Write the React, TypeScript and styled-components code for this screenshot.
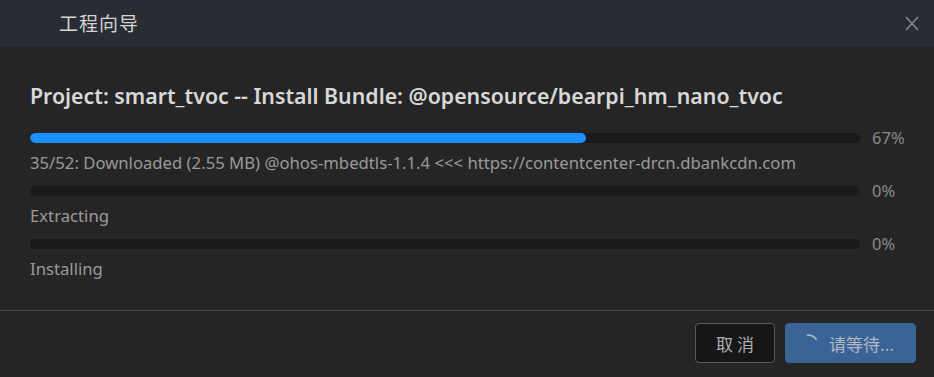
import React from "react";
import styled, { createGlobalStyle } from "styled-components";

const GlobalStyle = createGlobalStyle`
  *, *::before, *::after {
    box-sizing: border-box;
  }
  html, body {
    margin: 0;
    padding: 0;
    background: #252525;
  }
  body {
    font-family: "Noto Sans", "Noto Sans CJK SC", sans-serif;
  }
`;

interface Step {
  label: string;
  percent: number;
}

const steps: Step[] = [
  {
    label:
      "35/52: Downloaded (2.55 MB) @ohos-mbedtls-1.1.4 <<< https://contentcenter-drcn.dbankcdn.com",
    percent: 67,
  },
  { label: "Extracting", percent: 0 },
  { label: "Installing", percent: 0 },
];

export default function App() {
  return (
    <>
      <GlobalStyle />
      <Dialog>
        <TitleBar>
          <Title>工程向导</Title>
          <CloseButton aria-label="close">
            <svg width="14" height="15" viewBox="0 0 14 15">
              <path
                d="M1 1 L13 14 M13 1 L1 14"
                stroke="#8a8d93"
                strokeWidth="1.4"
                fill="none"
              />
            </svg>
          </CloseButton>
        </TitleBar>

        <Body>
          <Heading>
            Project: smart_tvoc -- Install Bundle: @opensource/bearpi_hm_nano_tvoc
          </Heading>
          <StepList>
            {steps.map((step) => (
              <StepRow key={step.label}>
                <Track>
                  <Fill style={{ width: `${step.percent}%` }} />
                </Track>
                <Percent>{step.percent}%</Percent>
                <StepLabel>{step.label}</StepLabel>
              </StepRow>
            ))}
          </StepList>
        </Body>

        <Footer>
          <Button>取 消</Button>
          <Button primary>
            <Spinner viewBox="0 0 16 16">
              {/* small arc of the loading ring */}
              <path
                d="M2.3 2.2 A10 10 0 0 1 11.2 6.3"
                stroke="#aab4c2"
                strokeWidth="1.6"
                fill="none"
                strokeLinecap="round"
              />
            </Spinner>
            请等待...
          </Button>
        </Footer>
      </Dialog>
    </>
  );
}

const Dialog = styled.div`
  width: 934px;
  height: 377px;
  display: flex;
  flex-direction: column;
  background: #252525;
  overflow: hidden;
`;

const TitleBar = styled.div`
  height: 47px;
  flex-shrink: 0;
  display: flex;
  align-items: center;
  justify-content: space-between;
  padding: 0 15px 0 59px;
  background: #292c33;
`;

const Title = styled.div`
  font-family: "Noto Sans CJK SC", sans-serif;
  font-size: 19px;
  color: #d4d4d4;
  letter-spacing: 1px;
  margin-top: -2px;
`;

const CloseButton = styled.div`
  display: flex;
  align-items: center;
  margin-top: -1px;
`;

const Body = styled.div`
  flex: 1;
  padding: 35px 29px 0 30px;
`;

const Heading = styled.h1`
  margin: 0 0 23px;
  font-size: 21.3px;
  font-weight: 600;
  color: #d8d8d8;
  line-height: 28px;
  white-space: nowrap;
`;

const StepList = styled.div`
  display: flex;
  flex-direction: column;
  gap: 12px;
`;

const StepRow = styled.div`
  display: grid;
  grid-template-columns: 830px 1fr;
  grid-template-rows: 10px auto;
  column-gap: 12px;
  align-items: center;
`;

const Track = styled.div`
  height: 10px;
  border-radius: 5px;
  background: #1a1a1a;
  overflow: hidden;
`;

const Fill = styled.div`
  height: 100%;
  border-radius: 5px;
  background: #1e8fff;
`;

const Percent = styled.div`
  font-size: 16.5px;
  color: #8a8a8a;
  line-height: 22px;
  margin: -6px 0;
`;

const StepLabel = styled.div`
  grid-column: 1 / span 2;
  font-size: 16.7px;
  color: #9a9a9a;
  line-height: 22px;
  white-space: nowrap;
  margin-top: 9px;
`;

const Footer = styled.div`
  height: 67px;
  flex-shrink: 0;
  display: flex;
  align-items: center;
  justify-content: flex-end;
  gap: 10px;
  padding: 0 18px 2px 0;
  border-top: 1px solid #444;
`;

const Spinner = styled.svg`
  width: 16px;
  height: 16px;
  margin: -4px 8px 0 -2px;
`;

const Button = styled.button<{ primary?: boolean }>`
  height: 40px;
  min-width: ${(p) => (p.primary ? "131px" : "80px")};
  display: flex;
  align-items: center;
  justify-content: center;
  border-radius: 4px;
  border: 1px solid ${(p) => (p.primary ? "#3a6396" : "#5a5a5a")};
  background: ${(p) => (p.primary ? "#3a6396" : "#161616")};
  color: ${(p) => (p.primary ? "#b0b9c4" : "#b0b0b0")};
  font-family: "Noto Sans CJK SC", sans-serif;
  font-size: 17px;
  padding: 0 ${(p) => (p.primary ? "14px" : "12px")};
`;
